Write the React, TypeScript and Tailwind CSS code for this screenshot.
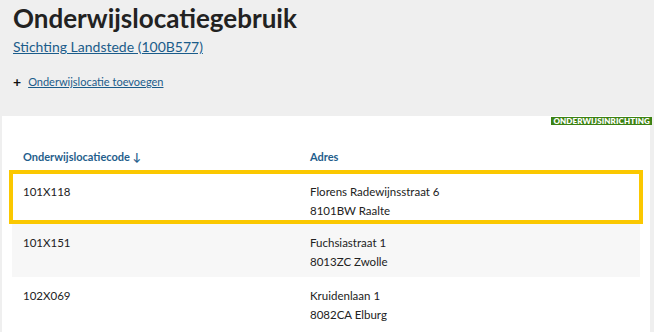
import React from "react";

const rows = [
  { code: "101X118", street: "Florens Radewijnsstraat 6", city: "8101BW Raalte", selected: true },
  { code: "101X151", street: "Fuchsiastraat 1", city: "8013ZC Zwolle", striped: true },
  { code: "102X069", street: "Kruidenlaan 1", city: "8082CA Elburg" },
];

export default function App() {
  return (
    <div className="w-[654px] h-[332px] overflow-hidden bg-[#efefef] text-[#222] font-['Lato',sans-serif]">
      <div className="px-[13px] pt-[1px]">
        <h1 className="text-[26px] leading-[34px] font-bold text-[#222]">Onderwijslocatiegebruik</h1>
        <a href="#" className="block mt-[3px] text-[14px] leading-[18px] text-[#1b5c8a] underline">
          Stichting Landstede (100B577)
        </a>
        <div className="mt-[19px] flex items-center gap-[7px]">
          <span className="text-[14px] font-bold leading-none text-[#111]">+</span>
          <a href="#" className="text-[11px] leading-[14px] text-[#1b5c8a] underline">
            Onderwijslocatie toevoegen
          </a>
        </div>
      </div>
      <div className="mt-[27px] ml-[2px] w-[648px] h-[220px] bg-white relative">
        <span className="absolute right-[-2px] top-[1px] bg-[#3c8212] text-white text-[8px] font-extrabold leading-[8px] px-[2px] tracking-[0.1px]">
          ONDERWIJSINRICHTING
        </span>
        <div className="pt-[34px] px-[7px]">
          <div className="flex text-[11px] leading-[14px] font-bold text-[#1f5e8c] pb-[6px]">
            <div className="w-[301px] pl-[14px]">Onderwijslocatiecode ↓</div>
            <div>Adres</div>
          </div>
          {rows.map((r) => (
            <div
              key={r.code}
              className={
                "flex text-[11.5px] leading-[19px] text-[#222] " +
                (r.selected
                  ? "border-[4px] border-[#fbc800] pt-[8px] pb-0"
                  : r.striped
                  ? "bg-[#f7f7f7] mx-[3px] pt-[9px] pb-[6px]"
                  : "mx-[3px] pt-[9px] pb-[6px]")
              }
            >
              <div className={r.selected ? "w-[297px] pl-[10px]" : "w-[298px] pl-[11px]"}>{r.code}</div>
              <div className="flex flex-col">
                <span>{r.street}</span>
                <span>{r.city}</span>
              </div>
            </div>
          ))}
        </div>
      </div>
    </div>
  );
}
